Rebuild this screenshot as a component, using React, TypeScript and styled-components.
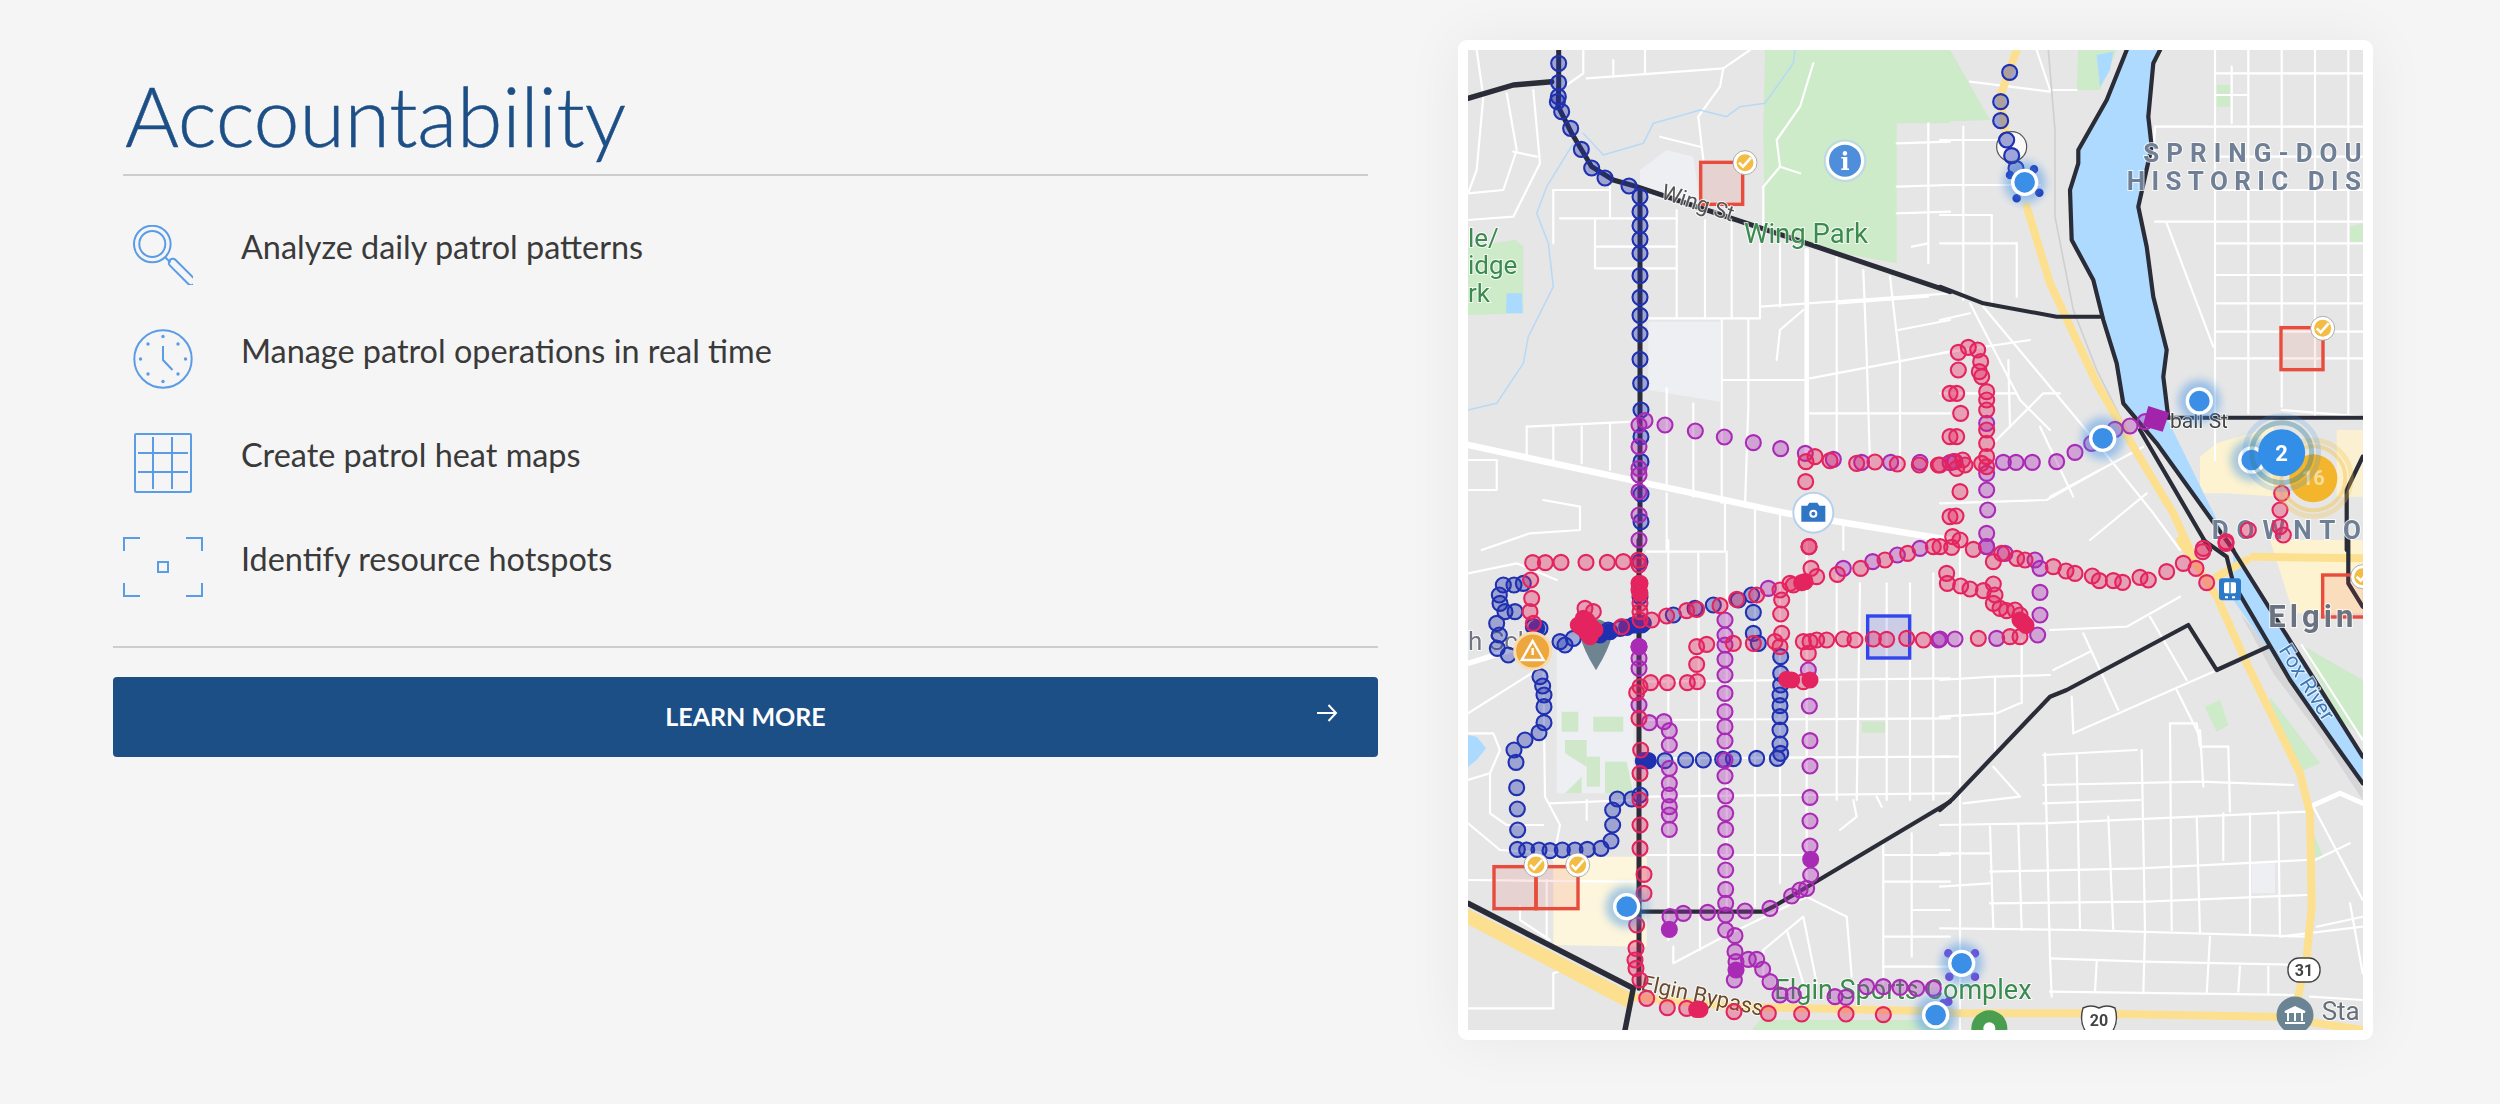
import React from "react";
import styled, { createGlobalStyle } from "styled-components";

const Global = createGlobalStyle`
  html, body { margin: 0; padding: 0; background: #f5f5f5; overflow: hidden; }
  body { font-family: "Lato", "Noto Sans", sans-serif; }
`;

const Page = styled.main`
  display: flex;
  align-items: flex-start;
  gap: 80px;
  width: 2500px;
  height: 1104px;
  box-sizing: border-box;
  padding: 40px 0 0 113px;
  background: #f5f5f5;
`;
const Content = styled.section`
  width: 1265px;
  flex: none;
`;
const Heading = styled.h1`
  margin: 0 10px;
  height: 136px;
  box-sizing: border-box;
  padding: 30px 0 0 2px;
  border-bottom: 2px solid #cdcdcd;
  font: 300 82.5px/92px "Lato", sans-serif;
  letter-spacing: -0.2px;
  color: #1d4f87;
  -webkit-text-stroke: 0.5px #1d4f87;
`;
const List = styled.ul`
  list-style: none;
  margin: 0;
  padding: 19px 0 35px 10px;
  border-bottom: 2px solid #cdcdcd;
`;
const Item = styled.li`
  display: flex;
  align-items: center;
  gap: 38px;
  height: 104px;
  font: 400 32.4px/40px "Lato", sans-serif;
  color: #3a3a3a;
`;
const IconBox = styled.span`
  display: flex;
  width: 80px;
  height: 64px;
  margin-top: 16px;
  flex: none;
  align-items: center;
  justify-content: center;
`;
const ItemText = styled.span`
  display: block;
`;
const LineIcon = styled.svg`
  fill: none;
  stroke: #5a9ce6;
  stroke-width: 2;
`;
const Button = styled.button`
  display: flex;
  position: relative;
  align-items: center;
  justify-content: center;
  width: 100%;
  height: 80px;
  margin-top: 29px;
  padding: 0 0 2px;
  border: 0;
  border-radius: 4px;
  background: #1d4f87;
  color: #fff;
  font: 700 25px/30px "Lato", sans-serif;
`;
const ButtonArrow = styled.svg`
  position: absolute;
  right: 40px;
  top: 27px;
  fill: none;
  stroke: #fff;
  stroke-width: 2;
`;
const MapCard = styled.figure`
  flex: none;
  width: 895px;
  height: 980px;
  margin: 0;
  padding: 10px;
  background: #fff;
  border-radius: 9px;
  box-shadow: 0 0 60px rgba(0, 0, 0, 0.06);
`;
const MapSvg = styled.svg`
  display: block;
  width: 895px;
  height: 980px;
  background: #e6e6e6;
  filter: blur(0.6px);
`;
const Road = styled.polyline<{ $w?: number; $c?: string }>`
  fill: none;
  stroke: ${(p) => p.$c ?? "#fff"};
  stroke-width: ${(p) => p.$w ?? 2.2};
  stroke-linejoin: round;
  stroke-linecap: round;
`;
const Area = styled.polygon<{ $c: string }>`
  fill: ${(p) => p.$c};
`;
const DotLayer = styled.g<{ $c: string; $solid?: boolean }>`
  fill: ${(p) => p.$c};
  fill-opacity: ${(p) => (p.$solid ? 1 : 0.36)};
  stroke: ${(p) => p.$c};
  stroke-width: 2.1;
`;
const Label = styled.text<{ $c: string; $s: number; $w?: number; $ls?: number }>`
  font-family: "Roboto", "Liberation Sans", sans-serif;
  fill: ${(p) => p.$c};
  font-size: ${(p) => p.$s}px;
  font-weight: ${(p) => p.$w ?? 400};
  letter-spacing: ${(p) => p.$ls ?? 0}px;
  paint-order: stroke;
  stroke: rgba(255, 255, 255, 0.75);
  stroke-width: 2px;
`;
const MarkLabel = styled.text<{ $c: string; $s: number; $serif?: boolean }>`
  font-family: ${(p) => (p.$serif ? '"DejaVu Serif", serif' : '"Roboto", "Liberation Sans", sans-serif')};
  fill: ${(p) => p.$c};
  font-size: ${(p) => p.$s}px;
  font-weight: 700;
  text-anchor: middle;
`;

type Q = "a" | "b" | "c" | "d";
const org: Record<Q, [number, number]> = { a: [1440, 30], b: [1940, 30], c: [1440, 540], d: [1940, 540] };
const pt = (q: Q, x: number, y: number): [number, number] => [org[q][0] + x / 3, org[q][1] + y / 3];
const pl = (q: Q, v: number[]) => {
  const out: string[] = [];
  for (let i = 0; i < v.length; i += 2) {
    const [x, y] = pt(q, v[i], v[i + 1]);
    out.push(`${x.toFixed(1)},${y.toFixed(1)}`);
  }
  return out.join(" ");
};

const minor: [Q, number[]][] = [
  ["a", [110,60,130,200,110,420,84,490]], ["a", [200,190,230,360,190,480,84,490]], ["a", [280,180,300,400,220,560,84,570]],
  ["a", [220,365,290,380]], ["a", [430,60,430,130,380,165]], ["a", [440,145,850,115]], ["a", [850,115,840,170,775,260,790,390]],
  ["a", [615,60,615,130]], ["a", [930,60,850,115]], ["a", [520,90,520,140]], ["a", [660,320,780,350]], ["a", [510,470,510,560]],
  ["a", [710,540,710,865]], ["a", [795,570,795,865]], ["a", [875,580,875,865]], ["a", [960,640,960,865]], ["a", [1020,640,1020,830]],
  ["a", [620,865,960,865]], ["a", [465,570,465,715]], ["a", [340,480,340,640]], ["a", [340,480,510,480]], ["a", [360,565,710,565]],
  ["a", [470,715,710,715]], ["a", [470,650,710,650]], ["a", [260,1190,580,1175]], ["a", [260,1190,260,1280]], ["a", [340,1190,340,1290]],
  ["a", [425,1190,425,1300]], ["a", [510,1180,510,1320]], ["a", [680,1075,680,1380]], ["a", [760,1120,760,1400]], ["a", [845,870,845,1420]],
  ["a", [925,870,925,1130,915,1430]], ["a", [1010,990,1020,900,1090,840]], ["a", [850,1050,1100,1050]], ["a", [1110,1045,1530,965]],
  ["a", [1190,680,1190,1270]], ["a", [1270,720,1280,980,1290,1300]], ["a", [1350,740,1380,1000,1380,1320]], ["a", [1465,280,1465,700]],
  ["a", [1370,340,1530,335]], ["a", [1370,470,1530,465]], ["a", [1370,550,1530,545]], ["a", [1415,650,1465,640]], ["a", [960,830,1530,790]],
  ["a", [1195,820,1465,800]], ["a", [1375,900,1530,870]], ["a", [1110,1150,1530,1150]], ["a", [84,1290,170,1290]], ["a", [170,1290,170,1380,84,1380]],
  ["a", [125,1560,270,1510,420,1500,420,1430,310,1410]], ["a", [680,1390,680,1560]], ["a", [855,1420,855,1560]], ["a", [945,1440,945,1560]],
  ["a", [1020,1450,1020,1560]], ["a", [1210,1480,1210,1560]], ["a", [970,590,970,470,1020,410,1080,430]], ["a", [1020,410,1010,330,1080,230,1120,100]],
  ["b", [825,60,825,1290]], ["b", [925,60,925,1150]], ["b", [1025,60,1025,1130]], ["b", [1125,60,1125,1160]], ["b", [1225,60,1225,1160]],
  ["b", [645,290,1268,290]], ["b", [830,130,1268,130]], ["b", [830,380,1268,380]], ["b", [830,480,1268,480]], ["b", [645,575,1268,575]],
  ["b", [830,640,1268,640]], ["b", [830,735,1268,735]], ["b", [830,820,1268,820]], ["b", [830,905,1268,905]], ["b", [830,985,1268,985]],
  ["b", [875,110,875,280]], ["b", [830,195,920,195]], ["b", [680,580,820,950]], ["b", [645,290,640,380]], ["b", [290,60,330,180,410,180]],
  ["b", [0,330,170,330]], ["b", [0,465,300,465]], ["b", [70,290,70,810]], ["b", [0,555,155,555]], ["b", [155,555,155,830]], ["b", [230,640,230,800]],
  ["b", [0,640,230,640]], ["b", [90,155,330,185]], ["b", [0,870,90,850]], ["b", [130,830,480,1250,640,1450,720,1560]], ["b", [90,820,240,1110,330,1200]],
  ["b", [0,970,270,930]], ["b", [205,990,210,1190]], ["b", [160,1240,310,1090,360,1090]], ["b", [0,1090,230,1090]], ["b", [0,1420,320,1410,480,1320]],
  ["b", [330,1400,610,1250]], ["b", [450,1530,620,1390]], ["b", [300,1190,400,1400]], ["b", [1025,1140,1268,1160]],
  ["c", [685,0,685,1200]], ["c", [775,40,780,1230]], ["c", [860,40,860,1100]], ["c", [945,0,945,1100]], ["c", [1020,0,1020,1030]], ["c", [1100,0,1100,1070]],
  ["c", [1190,100,1190,780]], ["c", [1260,130,1250,780]], ["c", [1340,130,1340,780]], ["c", [1410,130,1410,780]], ["c", [1480,100,1480,780]],
  ["c", [620,425,1530,415]], ["c", [620,540,1530,535]], ["c", [620,655,1530,650]], ["c", [620,770,1530,760]], ["c", [620,945,1100,945]],
  ["c", [620,35,860,35]], ["c", [1330,945,1530,945]], ["c", [1330,1025,1530,1025]], ["c", [1415,1110,1530,1110]], ["c", [1330,1190,1530,1190]],
  ["c", [1330,1280,1530,1280]], ["c", [1330,900,1330,1330]], ["c", [1415,880,1415,1250]], ["c", [84,100,230,70,350,120]], ["c", [84,520,290,390]],
  ["c", [84,580,160,580,180,630,150,700,84,720]], ["c", [150,700,150,820,200,855,310,855]], ["c", [310,400,315,770,360,855,340,960]],
  ["c", [330,790,580,780]], ["c", [84,850,180,930,350,940]], ["c", [84,1020,590,1025]], ["c", [240,1100,240,1140,330,1200]], ["c", [320,1020,320,1200]],
  ["c", [84,1405,340,1405]], ["c", [340,1405,340,1300,370,1290,300,1230]], ["c", [700,1220,700,1270,850,1190,1100,1070]], ["c", [1100,1070,1220,1130,1235,1310]],
  ["c", [970,1330,970,1230,1090,1130,1130,1330]], ["c", [1040,1170,1090,1330]], ["c", [1240,780,1250,830,1200,870]], ["c", [1310,770,1325,800]], ["c", [440,780,440,840]],
  ["d", [60,0,60,1470]], ["d", [150,860,160,1165]], ["d", [235,855,245,1170]], ["d", [315,640,330,1250,335,1370]], ["d", [410,645,420,1170]], ["d", [505,830,520,1170]],
  ["d", [605,630,615,1170,610,1360]], ["d", [690,550,695,1170]], ["d", [770,830,780,1180]], ["d", [850,820,850,960]], ["d", [930,820,930,1180]], ["d", [1015,815,1020,1185]],
  ["d", [810,1190,800,1360]], ["d", [900,1280,895,1355]], ["d", [985,1280,985,1360]], ["d", [470,1265,465,1355]], ["d", [780,570,790,740]], ["d", [865,620,870,815]],
  ["d", [690,550,770,550,780,620,865,620]], ["d", [0,855,310,850,1100,815]], ["d", [150,995,600,985,1100,960]], ["d", [150,1090,620,1085,1100,1065]],
  ["d", [0,1165,420,1170,1100,1190]], ["d", [330,1255,610,1265,1100,1275]], ["d", [330,1355,1060,1365]], ["d", [310,645,590,630]], ["d", [310,735,780,725,1060,735]],
  ["d", [310,790,600,780]], ["d", [0,1040,150,1030]], ["d", [0,940,150,940]], ["d", [400,580,820,395]], ["d", [710,450,780,590]], ["d", [430,280,535,510]],
  ["d", [340,390,450,335]], ["d", [630,230,740,420]], ["d", [330,270,560,260,720,170]], ["d", [395,470,400,580]], ["d", [165,410,330,405]], ["d", [165,410,165,650]],
  ["d", [0,650,60,650]], ["d", [0,530,170,520,240,490]], ["d", [0,420,160,410]], ["d", [245,300,245,490]], ["d", [1120,800,1268,1080]], ["d", [1125,960,1230,910]],
  ["d", [1130,1160,1268,1130]], ["d", [1020,1190,1268,1160]], ["d", [1110,1370,1268,1380]], ["d", [1085,315,1268,600]], ["d", [1230,1090,1268,1300]],
  ["d", [70,790,240,770,160,680]],
];
const major: [Q, number[], number][] = [
  ["a", [84,1245,1040,1450,1530,1530], 6.5], ["a", [1100,660,1100,1270], 4.5], ["c", [84,370,280,310], 5.5],
  ["d", [1110,800,1200,760,1268,790], 5],
];
const creek: [Q, number[]][] = [
  ["a", [84,1140,170,1120,250,1000,265,920,340,770,325,640,290,550,320,470,400,340]],
  ["a", [430,310,490,375,610,340,640,280,710,260,780,240,860,260,900,230,975,220,1060,100,1065,60]],
];
const yellow: [Q, number[]][] = [
  ["b", [230,60,180,200,200,330]], ["b", [260,530,330,760,400,910,470,1060,580,1250,700,1450,750,1560]],
  ["d", [720,0,830,170,920,370,1080,700,1110,820,1115,1100,1100,1250,1070,1390]],
  ["d", [0,1420,400,1420,1000,1430,1268,1470]], ["c", [84,1120,570,1370,900,1400,1530,1415]], ["c", [84,1140,560,1390]],
  ["d", [940,50,1268,55]], ["d", [830,110,920,60]],
];
const blackLines: [Q, number[], number][] = [
  ["a", [84,205,220,165,335,155], 5.4], ["a", [356,60,356,160,355,230,395,310,455,410,520,450,590,470,1040,620,1530,785], 5],
  ["a", [600,480,600,1560], 5], ["c", [597,0,597,1345], 5], ["b", [0,770,130,820,350,860,480,860], 4],
  ["b", [560,60,500,210,415,360,415,400,390,480,395,630,460,750,490,870,530,1000,550,1120,650,1240,880,1560], 4.2],
  ["b", [660,60,640,100,625,260,635,350,595,530,620,650,640,800,680,960,670,1040,685,1163], 4.2],
  ["b", [685,1163,1268,1163], 4], ["b", [600,1200,810,1560], 4.2], ["d", [790,0,860,50,880,130,1050,420,1190,620,1268,730], 4.2],
  ["d", [860,0,1268,650], 4.2], ["b", [1268,1280,1220,1380,1220,1560], 4.2], ["d", [1225,0,1225,130,1268,200], 4.2],
  ["d", [0,810,40,775,330,470,380,450,745,255,830,390,985,320], 4.2],
  ["c", [1530,785,1120,1030,1000,1100,970,1115,600,1115], 4.2], ["c", [84,1090,580,1345,555,1470], 5.5],
];

type D = [Q, number, number];
const list = (q: Q, v: number[]): D[] => {
  const r: D[] = [];
  for (let i = 0; i < v.length; i += 2) r.push([q, v[i], v[i + 1]]);
  return r;
};
const blue: D[] = [
  ...list("a", [356,100,356,158,355,200,352,215,365,245,392,295,424,358,455,414,495,444,567,468,600,500,600,545,600,587,600,628,600,670,600,737,600,802,600,856,600,912,600,988,602,1060,603,1140,603,1220,603,1295,603,1392,603,1475]),
  ...list("b", [209,127,182,215,182,272,200,330,215,377,228,415]),
  ...list("c", [190,135,222,135,250,130,178,165,180,190,195,215,225,215,170,250,178,285,172,325,205,345,280,260,300,265,360,305,375,315,400,295,475,280,505,270,540,265,580,255,605,255,600,65,600,170,700,225,765,205,820,195,895,180,935,165,940,217,940,280,955,310,300,410,308,438,312,465,312,500,312,548,297,578,255,600,222,630,228,667,230,743,232,807,233,870,232,928,260,930,297,930,330,932,367,930,405,930,442,928,483,925,513,903,518,855,518,810,532,777,575,777,600,765,620,662,675,662,737,660,790,660,848,658,880,656,950,655,1012,655,1022,640,1020,612,1020,570,1020,530,1020,497,1020,465,1022,435,1022,350,1022,400]),
];
const blueSolid: D[] = [...list("c", [560,262,590,255,610,250,480,285,510,275,290,265,610,662,625,662])];
const purple: D[] = [
  ...list("a", [597,1185,615,1172,675,1185,766,1203,853,1221,940,1238,1022,1256,1096,1270,597,1250,597,1315,597,1335,597,1385,597,1455,597,1530,1180,1288,1265,1297,1352,1297,1440,1297,1530,1298]),
  ...list("b", [190,1297,228,1297,277,1297,350,1295,405,1267,455,1240,525,1198,570,1188,615,1175,140,1180,140,1330,140,1380,143,1440,140,1510,140,1550,45,1295]),
  ...list("c", [855,240,855,285,855,315,855,358,855,405,855,460,855,515,855,560,855,603,855,660,855,708,857,768,857,820,857,868,857,935,857,990,857,1048,857,1090,857,1125,857,1170,885,1187,885,1235,888,1265,883,1320,925,1258,950,1258,968,1288,990,1325,1020,1365,1060,1365,1185,1370,1218,1372,1280,1340,1330,1340,1380,1342,1430,1345,1480,1345,597,320,597,355,597,385,597,495,628,548,672,545,688,572,688,615,688,685,688,730,688,765,688,800,688,825,688,868,1108,498,1110,602,1110,678,1110,772,1110,843,1110,918,1112,1005,1100,1045,1080,1050,1055,1068,990,1105,915,1113,803,1117,730,1120,690,1130,985,145,1210,85,1298,65,1372,45,1440,25,1495,300,1105,390]),
  ...list("d", [300,85,300,157,300,225,293,285,170,295,45,297,0,297,195,40,140,20,285,60]),
];
const purpleSolid: D[] = [...list("c", [688,1168,888,1290,1112,958,597,320])];
const pink: D[] = [
  ...list("a", [1098,1295,1125,1280,1170,1292,1250,1300,1305,1296,1372,1302,1438,1305,1495,1305,1097,1355,1107,1550,1530,1090,1530,1220,1530,1460]),
  ...list("b", [55,967,85,952,113,960,122,995,55,1020,118,1025,125,1040,50,1090,62,1150,50,1220,140,1085,140,1110,140,1140,140,1200,140,1240,140,1280,0,1305,40,1295,68,1290,75,1305,50,1315,125,1300,140,1310,60,1385,48,1458,38,1520,60,1530,1025,1390,1020,1440,1020,1490,1030,1515,925,1500,858,1535,790,1555]),
  ...list("c", [278,68,316,68,363,67,438,67,502,67,550,65,595,60,597,75,597,130,597,150,600,190,600,215,600,240,272,120,275,175,270,215,280,250,435,205,460,215,545,260,635,240,680,228,740,212,770,208,840,197,890,178,950,165,1020,150,1050,130,1060,135,1130,110,1113,85,1192,103,1262,85,1335,60,1403,40,1480,20,1107,20,880,310,770,320,800,313,770,373,940,310,1005,305,1025,180,1022,222,1025,280,1020,320,1090,305,1110,305,1130,300,1160,300,1210,297,1245,300,1300,297,1340,298,1400,295,1450,300,1105,340,1090,425,632,428,682,428,742,428,772,425,600,440,590,458,597,535,602,630,600,700,600,780,600,855,600,925,612,1003,612,1060,590,1155,588,1225,585,1260,588,1285,600,1320,620,1375,682,1403,740,1405,882,1415,985,1420,1085,1422,1218,1422,1330,1424]),
  ...list("d", [20,100,22,130,62,138,90,147,130,152,160,132,165,165,160,190,180,205,200,212,225,210,240,225,240,290,210,290,115,295,230,55,255,60,340,80,378,93,405,100,457,108,478,122,520,122,548,127,600,112,625,120,680,95,730,70,768,85,788,35,858,10,800,128,185,40,160,65,100,28,35,22,0,20]),
];
const pinkSolid: D[] = [...list("c", [440,258,425,262,455,262,440,240,440,278,415,255,465,270,430,235,450,290,1095,125,1085,128,1040,418,1055,420,1110,420,780,1408,770,1408,600,130,600,160]), ...list("d", [250,248,240,240,258,256])];
const Dots = ({ pts, r = 7.5 }: { pts: D[]; r?: number }) => (
  <>
    {pts.map(([q, x, y], i) => {
      const [cx, cy] = pt(q, x, y);
      return <circle key={i} cx={cx} cy={cy} r={r} />;
    })}
  </>
);

const Zone = ({ q, x, y, s, c, fill }: { q: Q; x: number; y: number; s: number; c: string; fill: string }) => {
  const [px, py] = pt(q, x, y);
  return <rect x={px} y={py} width={s} height={s} fill={fill} stroke={c} strokeWidth={3.4} />;
};
const Check = ({ q, x, y }: { q: Q; x: number; y: number }) => {
  const [cx, cy] = pt(q, x, y);
  return (
    <g>
      <circle cx={cx} cy={cy} r={12} fill="#fff" stroke="#9a9a9a" strokeWidth={0.8} />
      <circle cx={cx} cy={cy} r={8.5} fill="#f3bd45" />
      <path d={`M${cx - 6} ${cy} l4 4 l8 -9`} fill="none" stroke="#fff" strokeWidth={2.6} />
    </g>
  );
};
const BlueMark = ({ q, x, y }: { q: Q; x: number; y: number }) => {
  const [cx, cy] = pt(q, x, y);
  return (
    <g>
      <circle cx={cx} cy={cy} r={21} fill="#3d8fe8" opacity={0.45} filter="url(#soft)" />
      <circle cx={cx} cy={cy} r={12} fill="#3b8fe6" stroke="#fff" strokeWidth={3.4} />
    </g>
  );
};

const MapDrawing = () => {
  const [ix, iy] = pt("a", 1215, 392);
  const [cx, cy] = pt("a", 1120, 1448);
  const [wx, wy] = pt("c", 278, 333);
  const [px, py] = pt("c", 468, 280);
  const [bx, by] = pt("d", 870, 148);
  const [mx, my] = pt("d", 1065, 1425);
  const [gx, gy] = pt("d", 148, 1465);
  const [c2x, c2y] = pt("b", 1025, 1268);
  const [c6x, c6y] = pt("b", 1120, 1345);
  const [s1x, s1y] = pt("d", 1092, 1290);
  const [s2x, s2y] = pt("d", 477, 1440);
  const t = (q: Q, x: number, y: number) => {
    const [a, b] = pt(q, x, y);
    return { x: a, y: b };
  };
  const rot = (q: Q, x: number, y: number, a: number) => {
    const [m, n] = pt(q, x, y);
    return `rotate(${a} ${m} ${n})`;
  };
  const river = [...pl("b", [560,60,500,210,415,360,415,400,390,480,395,630,460,750,490,870,530,1000,550,1120,650,1240,880,1560]).split(" "),
    ...pl("d", [880,180,1050,420,1190,620,1268,730,1268,640]).split(" "),
    ...pl("d", [860,0]).split(" "),
    ...pl("b", [680,1163,670,1040,680,960,640,800,620,650,595,530,635,350,625,260,640,100,660,60]).split(" ")].join(" ");
  const purpleMarks = [[25,1240],[105,1240],[28,1310],[105,1310],[10,1390],[25,1385]];
  return (
    <MapSvg viewBox="1468 50 895 980" xmlns="http://www.w3.org/2000/svg">
      <defs>
        <filter id="soft" x="-50%" y="-50%" width="200%" height="200%"><feGaussianBlur stdDeviation="4" /></filter>
      </defs>
      <Area $c="#cdeac9" points={pl("a", [975,60,1530,60,1530,280,1370,280,1370,700,1100,650,975,590,970,300])} />
      <Area $c="#cdeac9" points={pl("b", [0,60,30,60,150,270,0,275])} />
      <Area $c="#cdeac9" points={pl("a", [84,650,225,630,250,650,250,850,84,855])} />
      <Area $c="#aadaff" points={pl("a", [200,790,245,790,248,850,198,850])} />
      <Area $c="#cdeac9" points={pl("b", [415,60,530,60,480,180,410,180])} />
      <Area $c="#aadaff" points={pl("b", [470,75,520,65,510,120,480,170])} />
      <Area $c="#cdeac9" points={pl("b", [1230,590,1268,580,1268,645,1230,640])} />
      <Area $c="#cdeac9" points={pl("b", [830,165,870,165,870,230,830,230])} />
      <Area $c="#edeff3" points={pl("a", [600,420,680,360,760,380,780,520,600,500])} />
      <Area $c="#edeff3" points={pl("a", [625,875,840,875,840,1115,625,1080])} />
      <Area $c="#edeff3" points={pl("c", [350,300,580,230,580,760,350,760])} />
      <Area $c="#cfe8c9" points={pl("c", [365,515,415,515,415,575,365,575])} />
      <Area $c="#cfe8c9" points={pl("c", [460,530,550,530,550,575,460,575])} />
      <Area $c="#cfe8c9" points={pl("c", [375,600,440,600,440,680,375,640])} />
      <Area $c="#cfe8c9" points={pl("c", [440,650,480,650,480,740,440,740])} />
      <Area $c="#cfe8c9" points={pl("c", [495,665,560,665,580,760,495,760])} />
      <Area $c="#cfe8c9" points={pl("c", [375,760,425,710,425,760])} />
      <Area $c="#cfe8c9" points={pl("c", [1265,545,1335,545,1335,578,1265,578])} />
      <Area $c="#fdf6dc" points={pl("c", [340,950,620,950,620,1220,340,1215])} />
      <Area $c="#aadaff" points={pl("c", [84,585,110,590,138,625,110,660,84,680])} />
      <Area $c="#fdf3d0" points={pl("b", [830,1240,1000,1190,1020,1400,860,1390,780,1390,780,1280])} />
      <Area $c="#fbf1d2" points={pl("b", [1190,1200,1268,1200,1268,1400,1190,1400])} />
      <Area $c="#fdf3d0" points={pl("d", [990,0,1268,0,1268,220,1060,220])} />
      <Area $c="#cdeac9" points={pl("d", [795,500,840,480,865,555,830,575])} />
      <Area $c="#cdeac9" points={pl("d", [1085,315,1268,420,1268,590,1200,540])} />
      <Area $c="#cdeac9" points={pl("d", [990,470,1140,670,1080,695,1000,560])} />
      <Area $c="#cdeac9" points={pl("d", [1120,880,1150,950,1120,950])} />
      <Area $c="#cdeac9" points={pl("c", [935,1470,960,1440,1530,1440,1530,1470])} />
      <Area $c="#edeff3" points={pl("d", [935,970,1005,970,1005,1060,935,1060])} />
      <Area $c="#d6d6d8" points={pl("d", [900,220,960,290,1050,420,1200,620,1268,750,1268,780,1150,600,1000,400])} />
      <polygon points={river} fill="#aedaff" />
      {minor.map(([q, v], i) => <Road key={i} points={pl(q, v)} />)}
      {major.map(([q, v, w], i) => <Road key={i} points={pl(q, v)} $w={w} />)}
      {creek.map(([q, v], i) => <Road key={i} points={pl(q, v)} $w={1.5} $c="#b7d9f5" />)}
      <Road points={pl("b", [325,60,345,300,345,560,400,840,470,1020,560,1200])} $w={1.6} $c="#cfcfd2" />
      {yellow.map(([q, v], i) => <Road key={i} points={pl(q, v)} $w={8} $c="#fde08f" />)}
      {blackLines.map(([q, v, w], i) => <Road key={i} points={pl(q, v)} $w={w} $c="#2a2c38" />)}

      <Zone q="a" x={782} y={397} s={42} c="#e74c3c" fill="rgba(231,76,60,.13)" />
      <Zone q="b" x={1023} y={893} s={42} c="#e74c3c" fill="rgba(231,76,60,.1)" />
      <Zone q="c" x={162} y={980} s={42} c="#e74c3c" fill="rgba(231,76,60,.13)" />
      <Zone q="c" x={288} y={980} s={42} c="#e74c3c" fill="rgba(231,76,60,.13)" />
      <Zone q="d" x={1148} y={105} s={42} c="#e74c3c" fill="rgba(231,76,60,.13)" />
      <Zone q="c" x={1283} y={228} s={42} c="#3346ee" fill="rgba(51,70,238,.15)" />

      <Label $c="#6f7f96" $s={26} $w={700} $ls={7} {...t("b", 610, 396)}>SPRING-DOU</Label>
      <Label $c="#6f7f96" $s={26} $w={700} $ls={6.4} {...t("b", 560, 480)}>HISTORIC DIS</Label>
      <Label $c="#6f7f96" $s={26} $w={700} $ls={8} {...t("b", 815, 1527)}>DOWNTO</Label>
      <Label $c="#6b7280" $s={31} $w={700} $ls={4} {...t("d", 985, 262)}>Elgin</Label>
      <Label $c="#3a8b4d" $s={27.5} {...t("a", 912, 640)}>Wing Park</Label>
      <Label $c="#3a8b4d" $s={26} {...t("a", 84, 650)}>le/</Label>
      <Label $c="#3a8b4d" $s={26} {...t("a", 84, 733)}>idge</Label>
      <Label $c="#3a8b4d" $s={26} {...t("a", 84, 815)}>rk</Label>
      <Label $c="#555" $s={22} transform={rot("a", 660, 505, 18)} {...t("a", 660, 505)}>Wing St</Label>
      <Label $c="#6f7680" $s={26} {...t("c", 84, 330)}>h Sch</Label>
      <Label $c="#3a8b4d" $s={27} {...t("c", 1003, 1378)}>Elgin Sports Complex</Label>
      <Label $c="#6b4a2a" $s={22} transform={rot("c", 600, 1350, 12)} {...t("c", 600, 1350)}>Elgin Bypass</Label>
      <Label $c="#3f77b5" $s={21} transform={rot("d", 1015, 330, 58)} {...t("d", 1015, 330)}>Fox River</Label>
      <Label $c="#66707a" $s={26} {...t("d", 1145, 1440)}>Sta</Label>
      <Label $c="#444" $s={21} {...t("b", 690, 1193)}>ball St</Label>

      <path d={`M${px - 16} ${py + 2} a16 16 0 0 1 32 0 q-3 14 -16 35 q-13 -21 -16 -35 z`} fill="#6f8491" />

      <DotLayer $c="#1f30b0"><Dots pts={blue} /></DotLayer>
      <DotLayer $c="#1f30b0" $solid><Dots pts={blueSolid} /></DotLayer>
      <DotLayer $c="#a92bb5"><Dots pts={purple} /></DotLayer>
      <DotLayer $c="#a92bb5" $solid><Dots pts={purpleSolid} /></DotLayer>
      <DotLayer $c="#e4245f"><Dots pts={pink} /></DotLayer>
      <DotLayer $c="#e4245f" $solid><Dots pts={pinkSolid} /></DotLayer>
      <polygon points={pl("b", [625,1128,688,1148,668,1205,608,1188])} fill="#a224ab" />

      <circle cx={pt("b", 215, 350)[0]} cy={pt("b", 215, 350)[1]} r={15} fill="rgba(255,255,255,.75)" stroke="#555" strokeWidth={1.2} />
      <DotLayer $c="#1f30b0"><Dots pts={list("b", [200,330,215,377])} /></DotLayer>
      <DotLayer $c="#1f30b0" $solid><Dots r={3.2} pts={list("b", [282,418,298,488,230,505,210,435])} /></DotLayer>
      <DotLayer $c="#7a3fd0" $solid><Dots r={3.2} pts={purpleMarks.map(([a, b]) => ["d", a, b] as D)} /></DotLayer>

      <BlueMark q="b" x={254} y={457} />
      <BlueMark q="b" x={778} y={1113} />
      <BlueMark q="b" x={488} y={1225} />
      <BlueMark q="c" x={560} y={1100} />
      <BlueMark q="d" x={65} y={1270} />
      <BlueMark q="c" x={1487} y={1425} />
      <BlueMark q="b" x={935} y={1290} />

      <Check q="a" x={915} y={398} />
      <Check q="b" x={1148} y={895} />
      <Check q="c" x={288} y={975} />
      <Check q="c" x={413} y={975} />
      <Check q="d" x={1268} y={110} />

      <g>
        <circle cx={ix} cy={iy} r={20.500} fill="none" stroke="#bcd4ef" strokeWidth={1.5} />
        <circle cx={ix} cy={iy} r={17.500} fill="#4f8edb" stroke="#fff" strokeWidth={3} />
        <MarkLabel $c="#fff" $s={24} $serif x={ix} y={iy + 9}>i</MarkLabel>
      </g>
      <g>
        <circle cx={cx} cy={cy} r={20} fill="#fff" stroke="#b9d0ec" strokeWidth={2} />
        <path d={`M${cx - 12} ${cy - 7} h6 l2 -3 h8 l2 3 h6 v16 h-24 z`} fill="#2f77c4" />
        <circle cx={cx} cy={cy + 1} r={4} fill="#fff" />
        <circle cx={cx} cy={cy + 1} r={2} fill="#2f77c4" />
      </g>
      <g>
        <circle cx={wx} cy={wy} r={18} fill="#eda73c" stroke="#f8dcae" strokeWidth={3} />
        <path d={`M${wx} ${wy - 10} l11 19 h-22 z`} fill="none" stroke="#fff" strokeWidth={2.4} />
        <path d={`M${wx} ${wy - 3} v7`} stroke="#fff" strokeWidth={2.4} />
      </g>
      <g>
        <rect x={bx - 11} y={by - 11} width={22} height={22} rx={3} fill="#2b79c9" />
        <rect x={bx - 6} y={by - 7} width={12} height={11} rx={1.5} fill="#fff" />
        <path d={`M${bx} ${by - 7} v11`} stroke="#2b79c9" strokeWidth={1.4} />
        <path d={`M${bx - 5} ${by + 8} h3 M${bx + 2} ${by + 8} h3`} stroke="#fff" strokeWidth={2} />
      </g>
      <g>
        <circle cx={mx} cy={my} r={18.5} fill="#6a8494" />
        <path d={`M${mx - 10} ${my - 3} l10 -5 l10 5 z M${mx - 7} ${my - 2} v8 M${mx} ${my - 2} v8 M${mx + 7} ${my - 2} v8 M${mx - 10} ${my + 8} h20`} fill="#fff" stroke="#fff" strokeWidth={2} />
      </g>
      <g>
        <circle cx={gx} cy={gy} r={18} fill="#4a9e50" />
        <circle cx={gx} cy={gy} r={6} fill="#fff" />
      </g>
      <g>
        <circle cx={c6x} cy={c6y} r={38} fill="none" stroke="#f3c34a" strokeWidth={5} opacity={0.3} />
        <circle cx={c6x} cy={c6y} r={32} fill="none" stroke="#f3c34a" strokeWidth={4} opacity={0.45} />
        <circle cx={c6x} cy={c6y} r={24} fill="#f2b52b" />
        <MarkLabel $c="#f6dd9c" $s={20} x={c6x} y={c6y + 7}>16</MarkLabel>
      </g>
      <g>
        <circle cx={c2x} cy={c2y} r={37} fill="none" stroke="#3d8fe8" strokeWidth={5} opacity={0.2} />
        <circle cx={c2x} cy={c2y} r={30} fill="none" stroke="#2f7f9a" strokeWidth={5} opacity={0.4} />
        <circle cx={c2x} cy={c2y} r={23.5} fill="#338ee8" />
        <MarkLabel $c="#fff" $s={22} x={c2x} y={c2y + 8}>2</MarkLabel>
      </g>
      <g>
        <rect x={s1x - 16} y={s1y - 12} width={32} height={24} rx={11} fill="#fff" stroke="#444" strokeWidth={1.4} />
        <MarkLabel $c="#444" $s={16} x={s1x} y={s1y + 6}>31</MarkLabel>
      </g>
      <g>
        <path d={`M${s2x - 16} ${s2y - 12} q8 -4 16 0 q8 -4 16 0 q4 14 -3 24 h-26 q-7 -10 -3 -24 z`} fill="#fff" stroke="#444" strokeWidth={1.4} />
        <MarkLabel $c="#444" $s={16} x={s2x} y={s2y + 6}>20</MarkLabel>
      </g>
    </MapSvg>
  );
};

const SearchIcon = () => (
  <LineIcon width="60" height="60" viewBox="0 0 60 60">
    <circle cx="19.300" cy="19" r="18.300" />
    <circle cx="19.300" cy="19" r="13" />
    <path d="M32 32 l5.500 5.500" />
    <rect x="32" y="43" width="34" height="8" rx="4" transform="rotate(45 49 47)" />
  </LineIcon>
);
const ClockIcon = () => (
  <LineIcon width="60" height="60" viewBox="0 0 60 60">
    <circle cx="30" cy="30" r="28.700" />
    <path d="M30 17 v14 l9.500 10" />
    <g fill="#5a9ce6" stroke="none">
      <circle cx="30" cy="7.500" r="1.700" /><circle cx="30" cy="52.500" r="1.700" /><circle cx="7.500" cy="30" r="1.700" /><circle cx="52.500" cy="30" r="1.700" />
      <circle cx="15" cy="15" r="1.700" /><circle cx="45" cy="15" r="1.700" /><circle cx="15" cy="45" r="1.700" /><circle cx="45" cy="45" r="1.700" />
    </g>
  </LineIcon>
);
const GridIcon = () => (
  <LineIcon width="58" height="60" viewBox="0 0 58 60">
    <rect x="1" y="1" width="56" height="58" rx="1" />
    <path d="M4 20 H54 M4 39 H54 M19 4 V56 M38 4 V56" />
  </LineIcon>
);
const HotspotIcon = () => (
  <LineIcon width="80" height="60" viewBox="0 0 80 60">
    <path d="M1 14 V1 H17 M63 1 H79 V14 M1 46 V59 H17 M63 59 H79 V46" />
    <rect x="35" y="25" width="10" height="10" />
  </LineIcon>
);

const features: [string, React.ReactNode][] = [
  ["Analyze daily patrol patterns", <SearchIcon />],
  ["Manage patrol operations in real time", <ClockIcon />],
  ["Create patrol heat maps", <GridIcon />],
  ["Identify resource hotspots", <HotspotIcon />],
];

export default function App() {
  return (
    <Page>
      <Global />
      <Content>
        <Heading>Accountability</Heading>
        <List>
          {features.map(([label, icon]) => (
            <Item key={label}>
              <IconBox>{icon}</IconBox>
              <ItemText>{label}</ItemText>
            </Item>
          ))}
        </List>
        <Button>
          LEARN MORE
          <ButtonArrow width="22" height="18" viewBox="0 0 22 18">
            <path d="M1 9 H20 M12.500 1 L20 9 L12.500 17" />
          </ButtonArrow>
        </Button>
      </Content>
      <MapCard>
        <MapDrawing />
      </MapCard>
    </Page>
  );
}
